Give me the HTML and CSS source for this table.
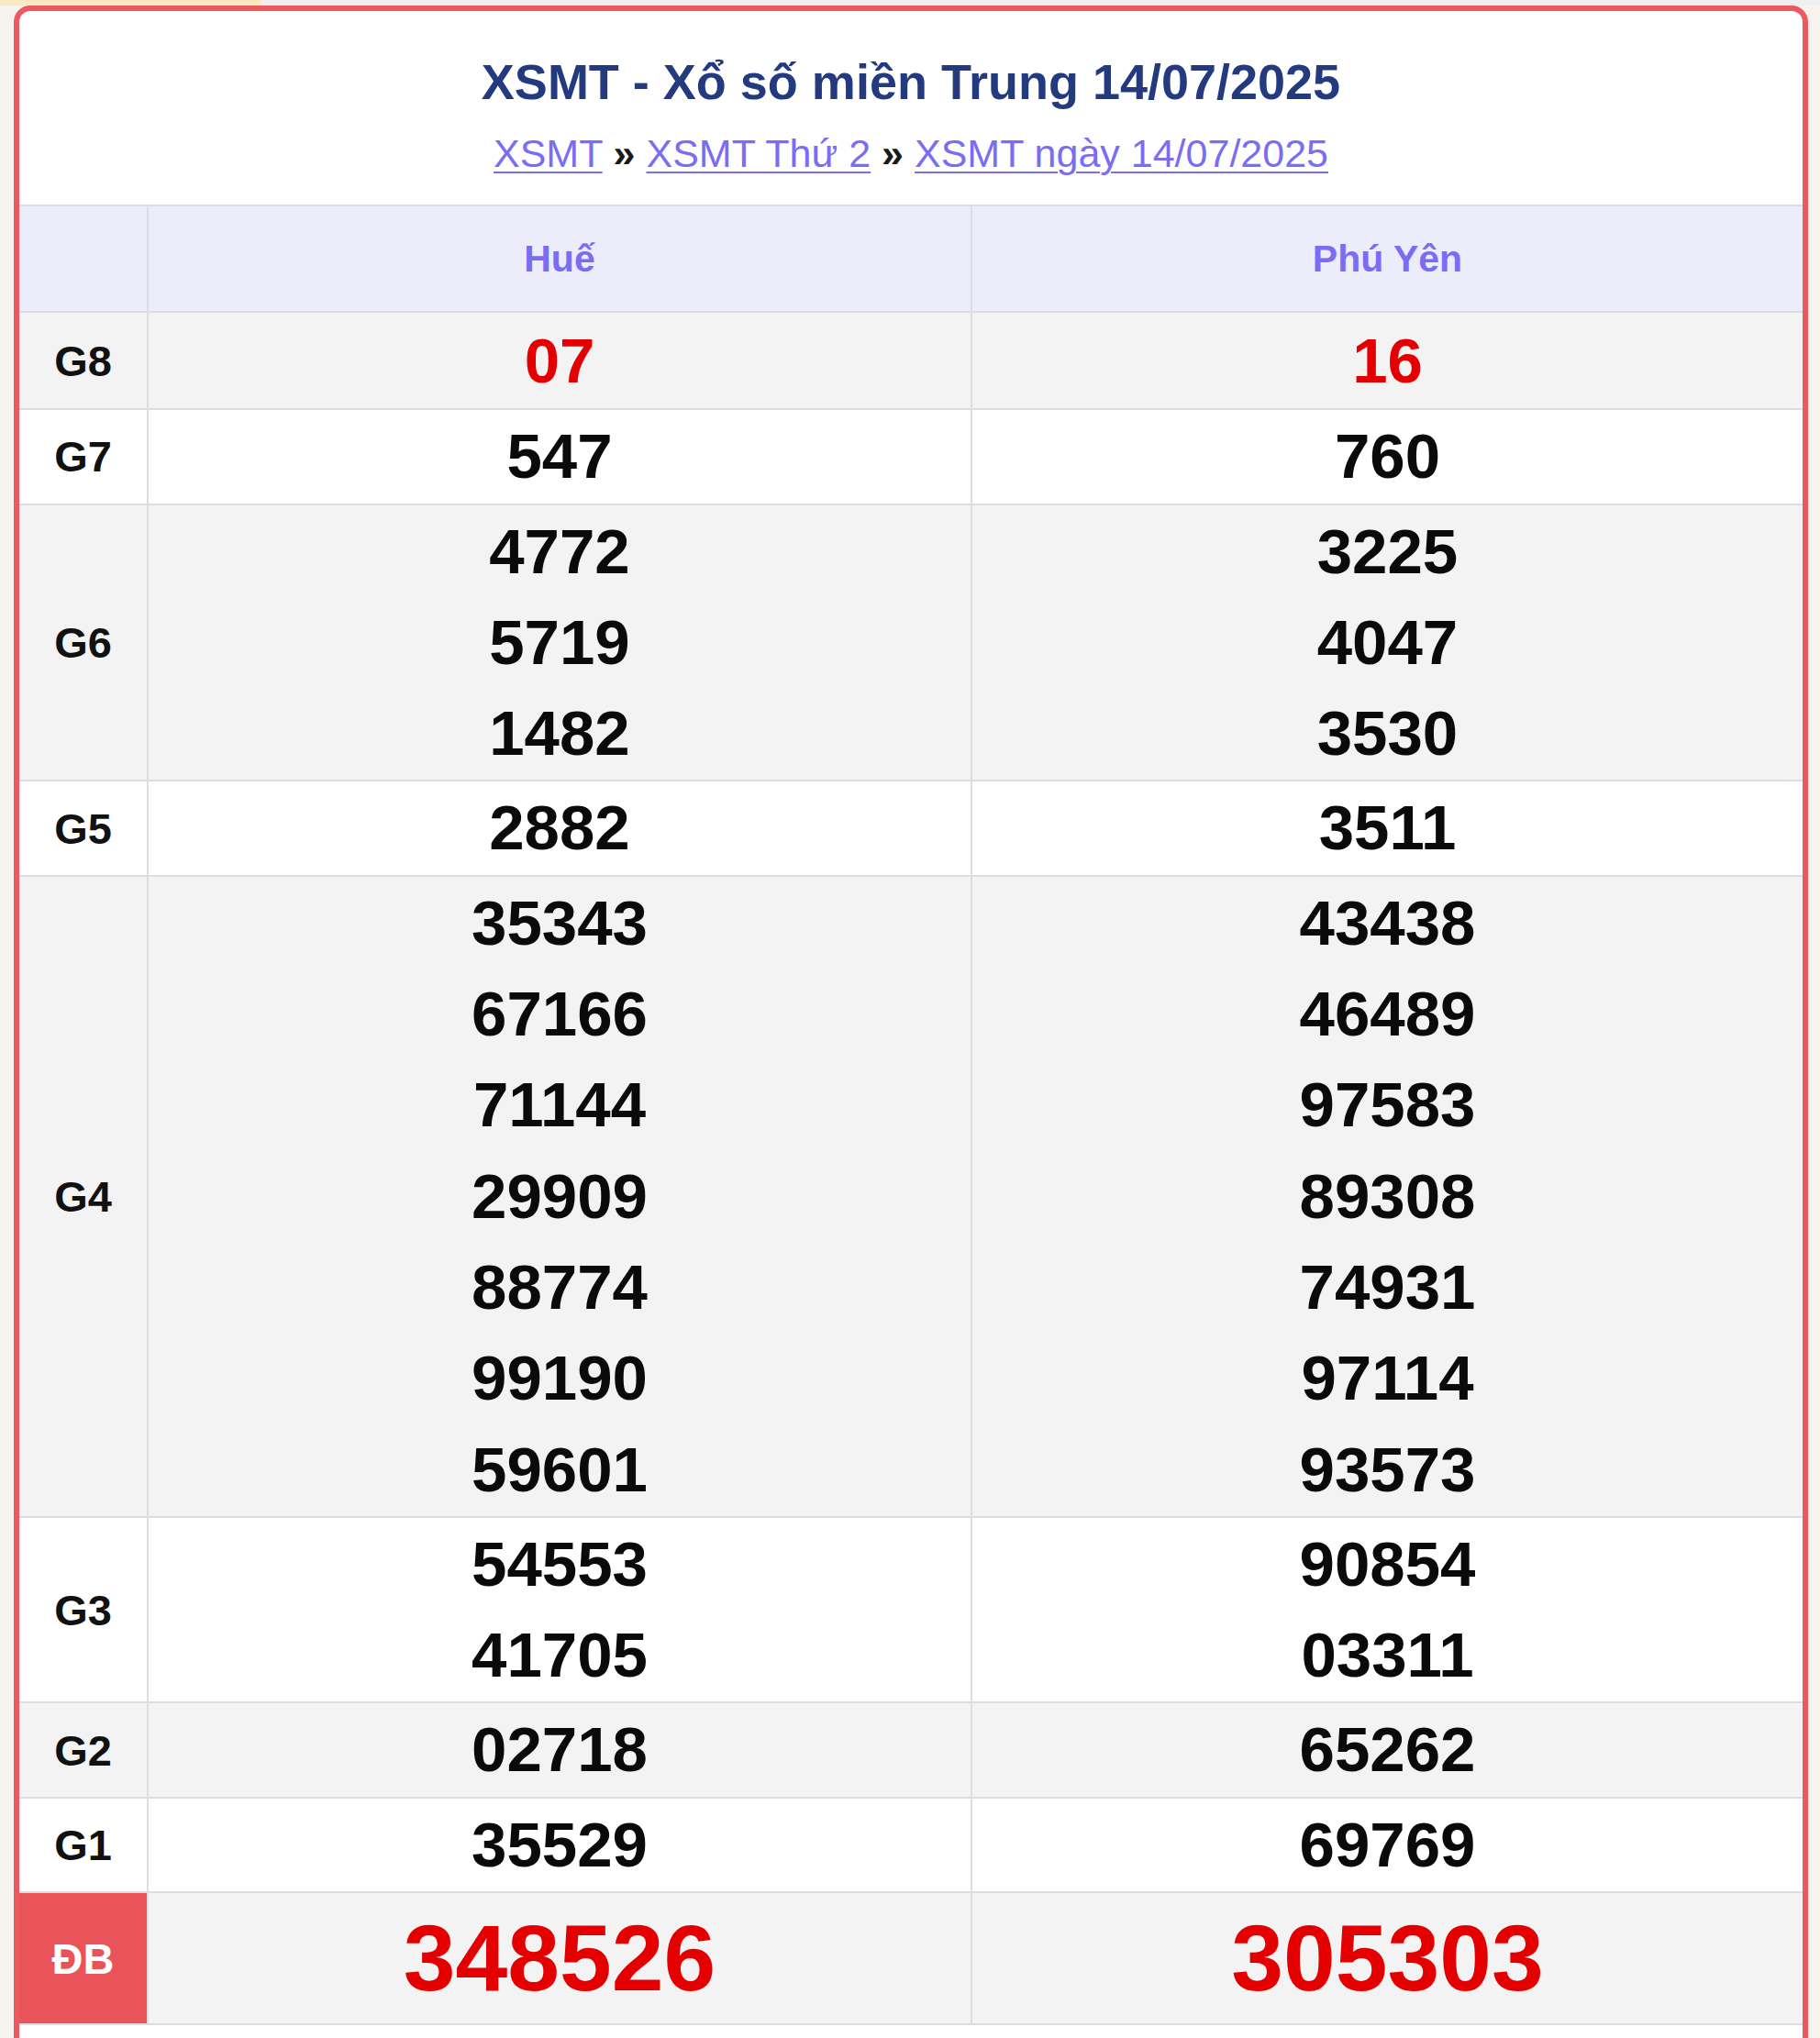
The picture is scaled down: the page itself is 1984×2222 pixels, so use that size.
FILE: index.html
```html
<!DOCTYPE html>
<html lang="vi">
<head>
<meta charset="utf-8">
<title>XSMT 14/07/2025</title>
<link rel="stylesheet" href="styles.css">
</head>
<body>
<div class="card">
  <div class="head">
    <h1 class="title">XSMT - Xổ số miền Trung 14/07/2025</h1>
    <div class="crumbs"><a href="#">XSMT</a> <b>»</b> <a href="#">XSMT Thứ 2</a> <b>»</b> <a href="#">XSMT ngày 14/07/2025</a></div>
  </div>
  <table class="kq">
    <colgroup><col class="c-label"><col class="c-prov"><col></colgroup>
    <thead>
      <tr><th></th><th>Huế</th><th>Phú Yên</th></tr>
    </thead>
    <tbody>
      <tr class="odd first"><td class="lb">G8</td><td><div class="n red">07</div></td><td><div class="n red">16</div></td></tr>
      <tr><td class="lb">G7</td><td><div class="n">547</div></td><td><div class="n">760</div></td></tr>
      <tr class="odd"><td class="lb">G6</td><td><div class="n">4772</div><div class="n">5719</div><div class="n">1482</div></td><td><div class="n">3225</div><div class="n">4047</div><div class="n">3530</div></td></tr>
      <tr><td class="lb">G5</td><td><div class="n">2882</div></td><td><div class="n">3511</div></td></tr>
      <tr class="odd"><td class="lb">G4</td><td><div class="n">35343</div><div class="n">67166</div><div class="n">71144</div><div class="n">29909</div><div class="n">88774</div><div class="n">99190</div><div class="n">59601</div></td><td><div class="n">43438</div><div class="n">46489</div><div class="n">97583</div><div class="n">89308</div><div class="n">74931</div><div class="n">97114</div><div class="n">93573</div></td></tr>
      <tr><td class="lb">G3</td><td><div class="n">54553</div><div class="n">41705</div></td><td><div class="n">90854</div><div class="n">03311</div></td></tr>
      <tr class="odd"><td class="lb">G2</td><td><div class="n">02718</div></td><td><div class="n">65262</div></td></tr>
      <tr><td class="lb">G1</td><td><div class="n">35529</div></td><td><div class="n">69769</div></td></tr>
      <tr class="odd db"><td class="lb">ĐB</td><td><div class="n big">348526</div></td><td><div class="n big">305303</div></td></tr>
    </tbody>
  </table>
</div>
</body>
</html>
```

FILE: styles.css
```css
html {
  background: linear-gradient(to right, #f9e9c3 0, #f9e9c3 285px, #efefef 285px) top left / 100% 6px no-repeat, #f6f2ed;
}
body {
  margin: 0;
  padding-top: 6px;
  font-family: "Liberation Sans", Arial, sans-serif;
}
.card {
  margin: 0 13px 0 15px;
  border: 6px solid #ec595e;
  border-radius: 18px 18px 0 0;
  background: #fff;
  padding-bottom: 30px;
}
.head {
  text-align: center;
  padding: 46px 0 32px;
}
.title {
  margin: 0 0 23px;
  font-size: 54px;
  line-height: 62px;
  font-weight: 700;
  color: #233b7e;
}
.crumbs {
  font-size: 43px;
  line-height: 48px;
  color: #1a1a1a;
}
.crumbs a {
  color: #7b6df3;
  text-decoration: underline;
  text-decoration-thickness: 2px;
  text-underline-offset: 5px;
}
.crumbs b {
  font-weight: 700;
}
.kq {
  width: 100%;
  border-collapse: collapse;
  table-layout: fixed;
}
.c-label {
  width: 140px;
}
.c-prov {
  width: 898px;
}
.kq th,
.kq td {
  border: 2px solid #dcdce3;
  padding: 1px 0;
  text-align: center;
  vertical-align: middle;
}
.kq tr > :first-child {
  border-left: none;
}
.kq tr > :last-child {
  border-right: none;
}
.kq thead th {
  background: #ececfb;
  height: 114px;
  padding: 0;
  font-size: 41px;
  font-weight: 700;
  color: #7b6df3;
}
.kq tbody tr {
  background: #fff;
}
.kq tbody tr.odd {
  background: #f3f3f3;
}
.kq tbody tr.first td {
  padding: 2.5px 0;
}
.lb {
  font-size: 47px;
  font-weight: 700;
  color: #111;
}
.n {
  font-size: 69px;
  line-height: 99.3px;
  font-weight: 700;
  color: #0a0a0a;
}
.n.red {
  color: #e40000;
}
.n.big {
  font-size: 102px;
  line-height: 140px;
  color: #e40000;
}
.db .lb {
  background: #e9535a;
  color: #fff;
}
```
